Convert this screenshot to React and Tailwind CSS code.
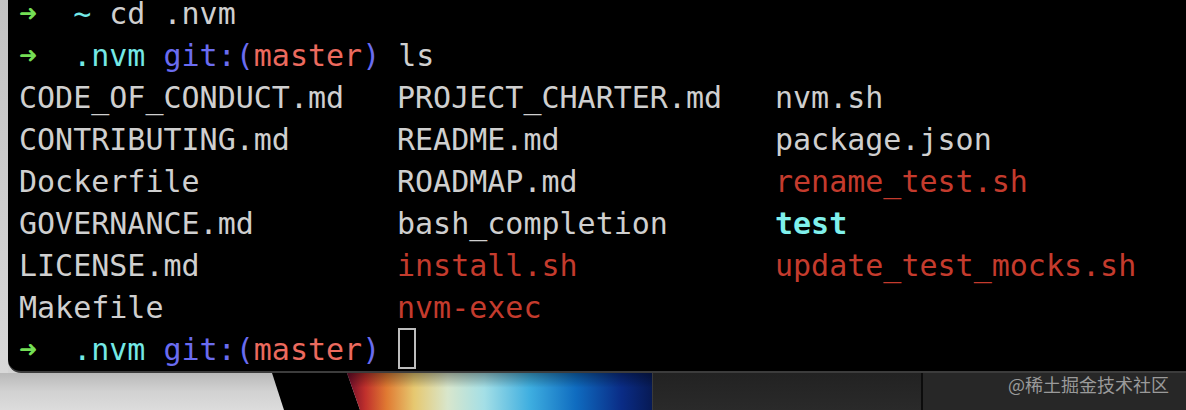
import React from "react";

const FONT = { fontFamily: '"DejaVu Sans Mono", "Liberation Mono", monospace' };

function Arrow() {
  return <span className="text-[#74df55] font-bold">➜</span>;
}

function Prompt({ dir, children }) {
  return (
    <div className="h-[42px] leading-[42px] whitespace-pre">
      <Arrow />
      <span>{"  "}</span>
      {dir === "~" ? (
        <span className="text-[#74e9e6]">~</span>
      ) : (
        <>
          <span className="text-[#74e9e6]">.nvm</span>
          <span> </span>
          <span className="text-[#6a6cf0]">git:(</span>
          <span className="text-[#ec6a5e]">master</span>
          <span className="text-[#6a6cf0]">)</span>
        </>
      )}
      {children}
    </div>
  );
}

const rows = [
  [["CODE_OF_CONDUCT.md"], ["PROJECT_CHARTER.md"], ["nvm.sh"]],
  [["CONTRIBUTING.md"], ["README.md"], ["package.json"]],
  [["Dockerfile"], ["ROADMAP.md"], ["rename_test.sh", "x"]],
  [["GOVERNANCE.md"], ["bash_completion"], ["test", "d"]],
  [["LICENSE.md"], ["install.sh", "x"], ["update_test_mocks.sh", "x"]],
  [["Makefile"], ["nvm-exec", "x"], [""]],
];

function Cell({ item }) {
  const [name, kind] = item;
  const cls =
    kind === "x"
      ? "text-[#c43b2d]"
      : kind === "d"
      ? "text-[#7ff0ec] font-bold"
      : "text-[#cfcfcf]";
  return <span className={cls}>{name}</span>;
}

export default function App() {
  return (
    <div className="w-[1186px] h-[410px] overflow-hidden flex flex-col bg-[#d4d4d4]">
      <div className="flex h-[373px]">
        <div className="w-[8px] bg-gradient-to-b from-[#c2c2c2] to-[#d8d8d8]" />
        <div
          className="flex-1 bg-black rounded-bl-[13px] border-b-2 border-[#3c3c3c] overflow-hidden text-[30px] text-[#cfcfcf]"
          style={FONT}
        >
          <div className="mt-[-7px] pl-[11px]">
            <Prompt dir="~">
              <span>{" cd .nvm"}</span>
            </Prompt>
            <Prompt dir=".nvm">
              <span>{" ls"}</span>
            </Prompt>
            {rows.map((r, i) => (
              <div
                key={i}
                className="grid grid-cols-[378px_378px_1fr] h-[42px] leading-[42px] whitespace-pre"
              >
                {r.map((c, j) => (
                  <Cell key={j} item={c} />
                ))}
              </div>
            ))}
            <Prompt dir=".nvm">
              <span> </span>
              <span className="inline-block w-[18px] h-[41px] border-2 border-[#bdbdbd] align-top mt-[-1px]" />
            </Prompt>
          </div>
        </div>
      </div>
      <div className="flex h-[37px]">
        <svg width="652" height="37" viewBox="0 0 652 37" className="block shrink-0">
          <defs>
            <linearGradient id="grey" x1="0" y1="0" x2="0" y2="1">
              <stop offset="0" stopColor="#b9b9b9" />
              <stop offset="0.5" stopColor="#d2d2d2" />
              <stop offset="1" stopColor="#dcdcdc" />
            </linearGradient>
            <linearGradient id="wall" x1="347" y1="0" x2="652" y2="0" gradientUnits="userSpaceOnUse">
              <stop offset="0" stopColor="#6a0a2a" />
              <stop offset="0.06" stopColor="#c0302c" />
              <stop offset="0.13" stopColor="#e07a32" />
              <stop offset="0.22" stopColor="#e6c870" />
              <stop offset="0.33" stopColor="#d8e6cc" />
              <stop offset="0.45" stopColor="#a4dfe6" />
              <stop offset="0.6" stopColor="#3eaee0" />
              <stop offset="0.75" stopColor="#0f6cc0" />
              <stop offset="0.9" stopColor="#0a2c86" />
              <stop offset="1" stopColor="#071a55" />
            </linearGradient>
            <linearGradient id="shade" x1="0" y1="0" x2="0" y2="1">
              <stop offset="0" stopColor="#000" stopOpacity="0.35" />
              <stop offset="0.4" stopColor="#000" stopOpacity="0" />
            </linearGradient>
          </defs>
          <polygon points="0,0 272,0 284,37 0,37" fill="url(#grey)" />
          <polygon points="272,0 347,0 360,37 284,37" fill="#000" />
          <polygon points="347,0 652,0 652,37 360,37" fill="url(#wall)" />
          <rect x="347" y="0" width="305" height="37" fill="url(#shade)" />
        </svg>
        <div className="w-[269px] bg-gradient-to-b from-[#222222] to-[#2a2a2a] border-l border-[#3a3a3a]" />
        <div className="w-[2px] bg-[#0c0c0c]" />
        <div
          className="flex-1 bg-[#272727] flex justify-end items-start pr-[17px] pt-[1px] text-[18px] leading-[20px] text-[#9a9a9a]"
          style={{ fontFamily: '"Noto Sans CJK SC", "Noto Sans", sans-serif' }}
        >
          @稀土掘金技术社区
        </div>
      </div>
    </div>
  );
}
